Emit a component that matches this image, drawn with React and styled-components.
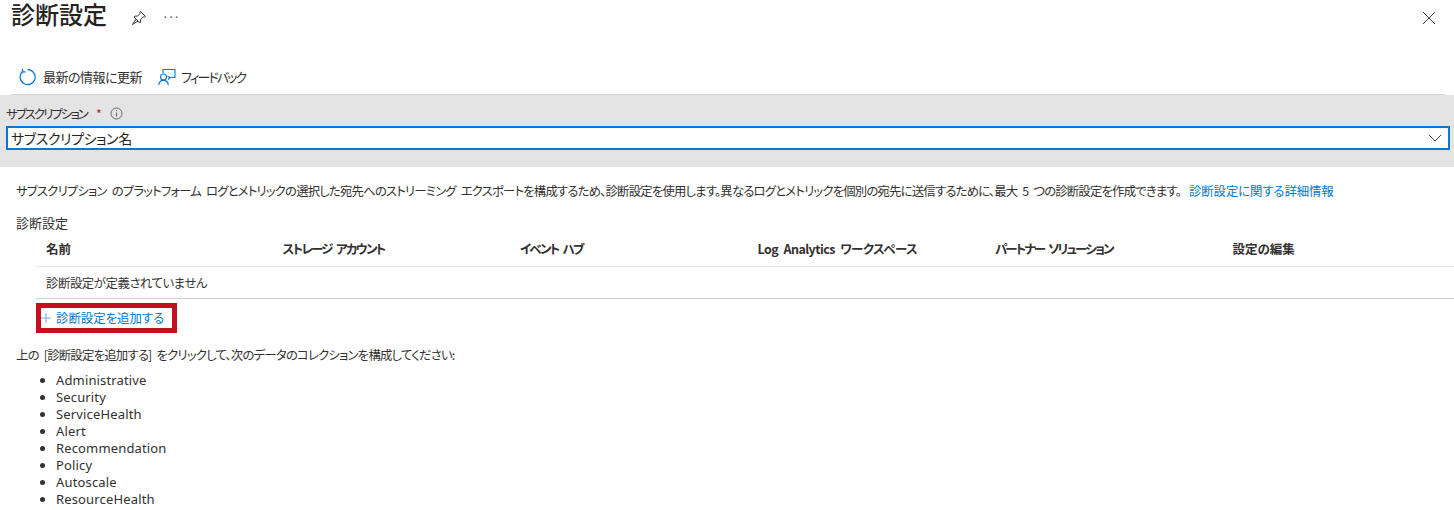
import React from "react";
import styled, { createGlobalStyle } from "styled-components";

const Global = createGlobalStyle`
  html, body { margin: 0; padding: 0; background: #fff; }
  body { font-family: "Noto Sans CJK JP", "Noto Sans", sans-serif; color: #323130; font-feature-settings: "palt" 1; }
`;
const Page = styled.div`width: 1454px; height: 510px; overflow: hidden; display: flex; flex-direction: column;`;
const Header = styled.header`height: 34px; display: flex; align-items: center; padding: 0 18px 0 11px;`;
const Title = styled.h1`margin: 0 0 7px; font-size: 24px; line-height: 26px; font-weight: 500; color: #252423; font-feature-settings: normal;`;
const IconBtn = styled.span`display: inline-flex; margin: 2px 0 0 ${p => p.$ml || 0}px; color: #444;`;
const Spacer = styled.div`flex: 1;`;
const More = styled.span`margin-left: 16px; font: 14px "Liberation Sans", sans-serif; letter-spacing: 1px; color: #555; position: relative; top: -1px;`;
const Toolbar = styled.div`height: 61px; margin: 0 9px 0 11px; box-sizing: border-box; padding: 25px 0 0 7px; display: flex; align-items: center; gap: 16px; border-bottom: 1px solid #d5d5d5;`;
const ToolItem = styled.div`display: flex; align-items: center; gap: ${p => p.$gap}px; font-size: 13px; letter-spacing: ${p => p.$ls}px; color: #323130;`;
const Band = styled.section`height: 72px; background: #e4e4e4; box-sizing: border-box; padding: 8px 4px 0 6px;`;
const LabelRow = styled.div`display: flex; align-items: center; height: 20px; font-size: 12.5px; letter-spacing: -2px; color: #323130;`;
const Req = styled.span`color: #a4262c; margin-left: 9px; margin-right: 10px;`;
const Select = styled.div`height: 24px; margin-top: 3px; box-sizing: border-box; border: 2px solid #0078d4; background: #fff; display: flex; align-items: center; justify-content: space-between; padding: 0 6px 1px 3px; font-size: 14px; letter-spacing: -0.4px; color: #252423;`;
const Main = styled.main`padding: 14px 0 0 16px; display: flex; flex-direction: column;`;
const Desc = styled.p`margin: 0; font-size: 12.4px; line-height: 20px; letter-spacing: -0.82px; word-spacing: 3px; white-space: nowrap; color: #323130;`;
const Link = styled.a`color: #0078d4; margin-left: 8px; letter-spacing: -0.1px;`;
const SectionLabel = styled.div`margin-top: 12px; font-size: 13px; line-height: 20px; color: #323130;`;
const Table = styled.div`margin-left: 20px;`;
const HeadRow = styled.div`display: grid; grid-template-columns: 236.5px repeat(5, 237.5px); height: 34px; box-sizing: border-box; padding: 0 0 3px 10px; align-items: center; border-bottom: 1px solid #e6e6e6;`;
const HeadCell = styled.span`font-size: 12.5px; font-weight: 700; letter-spacing: ${p => p.$ls}px; word-spacing: 3px; color: #323130; white-space: nowrap;`;
const EmptyRow = styled.div`height: 32px; box-sizing: border-box; display: flex; align-items: center; padding-left: 10px; border-bottom: 1px solid #cfcfcf; font-size: 12.4px; letter-spacing: -0.45px; color: #323130;`;
const AddBox = styled.div`margin-top: 4px; width: 141px; height: 30px; box-sizing: border-box; border: 5px solid #c50f1f; display: flex; align-items: center; gap: 5px; padding-bottom: 1px; font-size: 12.4px; color: #0078d4;`;
const Note = styled.p`margin: 12px 0 0; font-size: 12.4px; line-height: 20px; letter-spacing: -0.79px; word-spacing: 3px; color: #323130;`;
const List = styled.ul`margin: 7px 0 0; padding: 0 0 0 40px; font: 13px/17px "Noto Sans", sans-serif; letter-spacing: 0.15px; color: #323130;`;

const items = ["Administrative","Security","ServiceHealth","Alert","Recommendation","Policy","Autoscale","ResourceHealth"];
const cols = [["名前",0],["ストレージ アカウント",-1.7],["イベント ハブ",-1.75],["Log Analytics ワークスペース",-0.55],["パートナー ソリューション",-1.9],["設定の編集",0]];

export default function App() {
  return (
    <Page>
      <Global />
      <Header>
        <Title>診断設定</Title>
        <IconBtn $ml={24}>
          <svg width="16" height="16" viewBox="0 0 16 16" fill="none" stroke="#333" strokeWidth="1"><path d="M9.5 1.5l5 5-1 .6-1.2-.3-2.8 2.8.2 2.4-1 1L5 9 1.5 14.5 7 11 3 7l1-1 2.4.2 2.8-2.8-.3-1.2z"/></svg>
        </IconBtn>
        <More>···</More>
        <Spacer />
        <IconBtn>
          <svg width="14" height="14" viewBox="0 0 14 14" stroke="#444" strokeWidth="1"><path d="M1 1l12 12M13 1L1 13"/></svg>
        </IconBtn>
      </Header>
      <Toolbar>
        <ToolItem $gap={7} $ls={-0.5}>
          <svg width="18" height="18" viewBox="0 0 18 18" fill="none" stroke="#0078d4" strokeWidth="1.2"><path d="M5 3.2A7.5 7.5 0 1 0 9.5 1.6"/><path d="M4.5 .8v3h3"/></svg>
          最新の情報に更新
        </ToolItem>
        <ToolItem $gap={5} $ls={-2}>
          <svg width="18" height="18" viewBox="0 0 18 18" fill="none" stroke="#0078d4" strokeWidth="1.1"><path d="M5 5V1.5h12v8h-5"/><path d="M9.500 8l2.500 1.500L10 11.500"/><circle cx="5.500" cy="9" r="3"/><path d="M.8 17c.3-3 2-4.600 4.700-4.600S10 14 10.300 17"/></svg>
          フィードバック
        </ToolItem>
      </Toolbar>
      <Band>
        <LabelRow>
          サブスクリプション<Req>*</Req>
          <svg width="13" height="13" viewBox="0 0 13 13" fill="none" stroke="#666"><circle cx="6.500" cy="6.500" r="5.500"/><path d="M6.500 5.500v4M6.500 3.200v1"/></svg>
        </LabelRow>
        <Select>
          サブスクリプション名
          <svg width="14" height="8" viewBox="0 0 14 8" fill="none" stroke="#444"><path d="M1 1l6 6 6-6"/></svg>
        </Select>
      </Band>
      <Main>
        <Desc>
          サブスクリプション のプラットフォーム ログとメトリックの選択した宛先へのストリーミング エクスポートを構成するため、診断設定を使用します。異なるログとメトリックを個別の宛先に送信するために、最大 5 つの診断設定を作成できます。
          <Link>診断設定に関する詳細情報</Link>
        </Desc>
        <SectionLabel>診断設定</SectionLabel>
        <Table>
          <HeadRow>{cols.map(([c, ls]) => <HeadCell key={c} $ls={ls}>{c}</HeadCell>)}</HeadRow>
          <EmptyRow>診断設定が定義されていません</EmptyRow>
          <AddBox>
            <svg width="10" height="10" viewBox="0 0 10 10" stroke="#6aa8dc"><path d="M5 0v10M0 5h10"/></svg>
            診断設定を追加する
          </AddBox>
        </Table>
        <Note>上の [診断設定を追加する] をクリックして、次のデータのコレクションを構成してください:</Note>
        <List>{items.map(i => <li key={i}>{i}</li>)}</List>
      </Main>
    </Page>
  );
}
